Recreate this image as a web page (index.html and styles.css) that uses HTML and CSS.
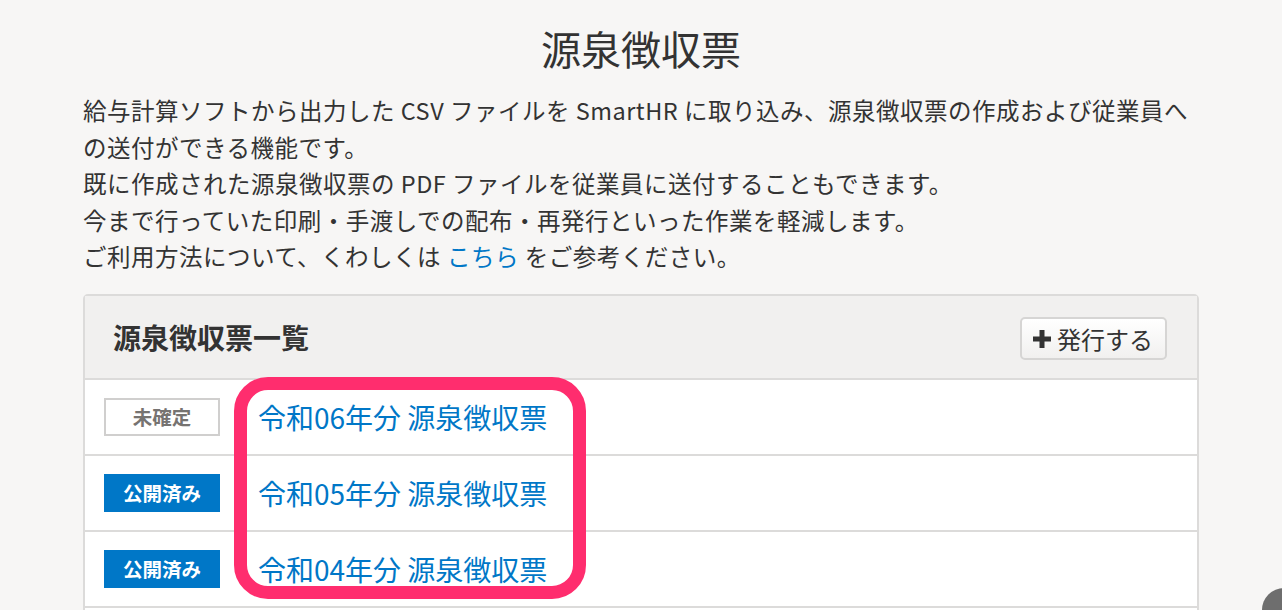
FILE: index.html
```html
<!DOCTYPE html>
<html lang="ja">
<head>
    <meta charset="UTF-8">
    <meta name="viewport" content="width=device-width, initial-scale=1.0">
    <title>源泉徴収票</title>
    <link rel="stylesheet" href="styles.css">
</head>
<body>
    <div class="page">
        <h1 class="title">源泉徴収票</h1>
        <p class="intro">
            給与計算ソフトから出力した CSV ファイルを SmartHR に取り込み、源泉徴収票の作成および従業員への送付ができる機能です。<br>
            既に作成された源泉徴収票の PDF ファイルを従業員に送付することもできます。<br>
            今まで行っていた印刷・手渡しでの配布・再発行といった作業を軽減します。<br>
            ご利用方法について、くわしくは <a href="#" class="link">こちら</a> をご参考ください。
        </p>

        <div class="panel">
            <div class="panel-head">
                <h2>源泉徴収票一覧</h2>
                <button type="button" class="btn">
                    <svg width="20" height="20" viewBox="0 0 20 20"><path d="M7.5 1h5v6.5H19v5h-6.5V19h-5v-6.5H1v-5h6.5z" fill="#333"/></svg>
                    発行する
                </button>
            </div>
            <div class="rows">
                <div class="row">
                    <span class="badge draft">未確定</span>
                    <a href="#" class="row-link">令和06年分 源泉徴収票</a>
                </div>
                <div class="row">
                    <span class="badge done">公開済み</span>
                    <a href="#" class="row-link">令和05年分 源泉徴収票</a>
                </div>
                <div class="row">
                    <span class="badge done">公開済み</span>
                    <a href="#" class="row-link">令和04年分 源泉徴収票</a>
                </div>
                <div class="row"></div>
                <!-- 注釈の枠 -->
                <div class="mark"></div>
            </div>
        </div>
    </div>
    <div class="fab"></div>
</body>
</html>
```

FILE: styles.css
```css
body {
    margin: 0;
    background-color: #f7f6f5;
    color: #333;
    font-family: "Noto Sans CJK JP", "Noto Sans", sans-serif;
    overflow: hidden;
}

.page {
    width: 1116px;
    margin: 0 auto;
    padding-top: 20px;
}

.title {
    margin: 0;
    text-align: center;
    font-size: 40px;
    font-weight: normal;
    line-height: 56px;
}

.intro {
    margin: 16px 0 0;
    font-size: 23.5px;
    line-height: 36.5px;
    letter-spacing: 0.5px;
}

.link {
    color: #0077c7;
    text-decoration: none;
}

.panel {
    margin-top: 19px;
    border: 2px solid #dcdbda;
    border-radius: 5px 5px 0 0;
    background: #fff;
}

.panel-head {
    display: flex;
    justify-content: space-between;
    align-items: center;
    height: 82px;
    padding: 0 30px 0 28px;
    background: #f1f0ef;
    border-bottom: 2px solid #dcdbda;
}

.panel-head h2 {
    margin: 0;
    font-size: 28px;
    font-weight: bold;
}

.btn {
    display: flex;
    align-items: center;
    gap: 5px;
    height: 43px;
    margin-top: 4px;
    padding: 0 12px 0 10px;
    border: 2px solid #d6d5d4;
    border-radius: 5px;
    background: linear-gradient(#fff, #f1f0ef);
    color: #333;
    font-family: inherit;
    font-size: 24px;
}

.rows {
    position: relative;
}

.row {
    display: flex;
    align-items: center;
    gap: 38px;
    height: 74px;
    padding-left: 19px;
    border-bottom: 2px solid #dcdbda;
}

.badge {
    box-sizing: border-box;
    width: 116px;
    height: 38px;
    display: flex;
    align-items: center;
    justify-content: center;
    font-size: 19.5px;
    font-weight: bold;
}

.draft {
    border: 2px solid #d0cfce;
    color: #767371;
}

.done {
    background: #0077c7;
    color: #fff;
}

.row-link {
    color: #0077c7;
    text-decoration: none;
    font-size: 28px;
}

.mark {
    position: absolute;
    left: 149px;
    top: -3px;
    box-sizing: border-box;
    width: 352px;
    height: 222px;
    border: 13px solid #ff2d6e;
    border-radius: 34px;
}

.fab {
    position: fixed;
    left: 1262px;
    top: 588px;
    width: 44px;
    height: 44px;
    border-radius: 50%;
    background: #6e6e6e;
}
```
